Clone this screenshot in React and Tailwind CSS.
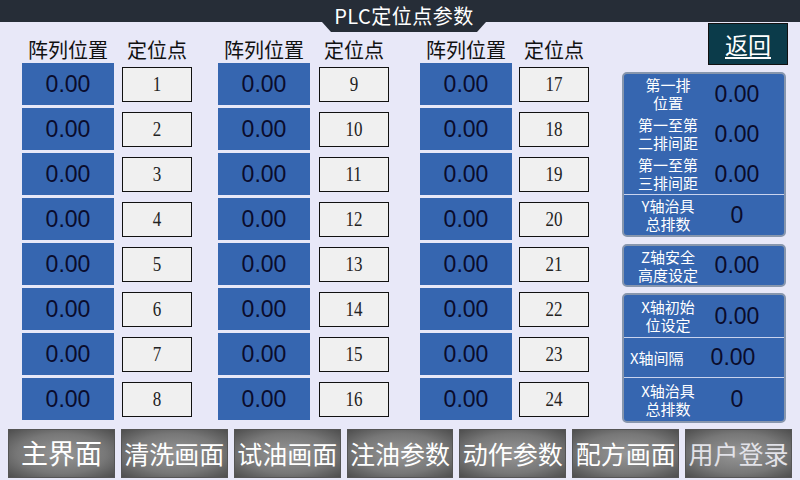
import React from "react";

const cjk = "font-['Noto_Sans_CJK_SC',sans-serif]";
const sans = "font-['Liberation_Sans',Arial,sans-serif]";

// positions 1..24 in three groups of eight
const groups = [
  { ml: "ml-[22px]", gap: "gap-[8px]", start: 1 },
  { ml: "ml-[26px]", gap: "gap-[9px]", start: 9 },
  { ml: "ml-[31px]", gap: "gap-[7px]", start: 17 },
];

const navItems = ["主界面", "清洗画面", "试油画面", "注油参数", "动作参数", "配方画面", "用户登录"];

const PointGroup = ({ ml, gap, start }) => (
  <div className={`${ml} flex flex-col`}>
    <div className={`flex ${gap} h-[27px] items-center text-[20px] text-[#111] ${cjk}`}>
      <div className="w-[92px] text-center whitespace-nowrap">阵列位置</div>
      <div className="w-[70px] text-center whitespace-nowrap">定位点</div>
    </div>
    <div className="flex flex-col gap-[3px]">
      {Array.from({ length: 8 }, (_, i) => (
        <div key={i} className={`flex ${gap} items-center`}>
          <div className={`w-[92px] h-[42px] bg-[#3666b0] flex items-center justify-center text-[23px] text-[#0a0c2c] ${sans}`}>
            0.00
          </div>
          <div className="w-[70px] h-[35px] bg-[#f0f0f0] border border-[#111] flex items-center justify-center">
            <span className="inline-block scale-x-85 text-[20px] text-[#222] font-['Liberation_Serif',serif]">
              {start + i}
            </span>
          </div>
        </div>
      ))}
    </div>
  </div>
);

const ParamRow = ({ label, value = "0.00", h, divider, left }) => (
  <div className={`flex items-center ${h} ${divider ? "border-t border-[#c9d3ee]" : ""}`}>
    {left ? (
      <div className={`pl-[6px] w-[84px] text-[15px] leading-[18px] text-white whitespace-nowrap ${cjk}`}>{label}</div>
    ) : (
      <div className={`w-[88px] flex flex-col items-center text-[15px] text-white ${cjk}`}>
        {label.map((l) => (
          <span key={l} className="block h-[18px] leading-[18px] whitespace-nowrap">{l}</span>
        ))}
      </div>
    )}
    <div className={`w-[50px] text-center text-[23px] text-[#0a0c2c] ${sans}`}>{value}</div>
  </div>
);

const Panel = ({ className, children }) => (
  <div className={`w-[164px] border-2 border-[#8796ad] rounded-[5px] bg-[#3666b0] overflow-hidden flex flex-col ${className}`}>
    {children}
  </div>
);

export default function App() {
  return (
    <div className="relative w-[800px] h-[480px] bg-[#e8e8f8] flex flex-col overflow-hidden">
      {/* top bar */}
      <div className="h-[22px] bg-[#262d37] shrink-0" />
      <div className="absolute left-[322px] top-0 w-[164px] h-[32px] bg-[#262d37] [clip-path:polygon(0_0,100%_0,100%_22px,calc(100%-9px)_100%,9px_100%,0_22px)] flex items-center justify-center">
        <span className={`text-[20px] text-white tracking-[0.5px] ${cjk}`}>PLC定位点参数</span>
      </div>

      {/* content */}
      <div className="flex h-[407px] shrink-0">
        <div className="flex pt-[14px]">
          {groups.map((g) => (
            <PointGroup key={g.start} {...g} />
          ))}
        </div>

        <div className="ml-[33px] w-[166px] flex flex-col">
          <div className="ml-auto mt-[1px] w-[80px] h-[42px] bg-[#0b3b4a] border border-[#111] flex items-center justify-center">
            <span className={`text-[23px] text-white underline underline-offset-[3px] ${cjk}`}>返回</span>
          </div>

          <Panel className="mt-[7px] h-[165px]">
            <ParamRow label={["第一排", "位置"]} h="h-[40px]" />
            <ParamRow label={["第一至第", "二排间距"]} h="h-[40px]" />
            <ParamRow label={["第一至第", "三排间距"]} h="h-[40px]" />
            <ParamRow label={["Y轴治具", "总排数"]} value="0" h="flex-1" divider />
          </Panel>

          <Panel className="mt-[7px] h-[43px]">
            <ParamRow label={["Z轴安全", "高度设定"]} h="flex-1" />
          </Panel>

          <Panel className="mt-[6px] h-[130px]">
            <ParamRow label={["X轴初始", "位设定"]} h="h-[42px]" />
            <ParamRow label="X轴间隔" left h="h-[40px]" divider />
            <ParamRow label={["X轴治具", "总排数"]} value="0" h="flex-1" divider />
          </Panel>
        </div>
      </div>

      {/* bottom navigation */}
      <div className="flex gap-[6px] px-[8px] h-[49px] shrink-0">
        {navItems.map((t, i) => (
          <div
            key={t}
            className={`w-[107px] h-[49px] border border-[#555] bg-[radial-gradient(ellipse_at_center,#969696_0%,#777_60%,#4e4e4e_100%)] flex items-center justify-center whitespace-nowrap ${cjk} ${
              i === 0 ? "text-[27px]" : "text-[25px]"
            } ${i === 6 ? "text-[#e2e2e8]" : "text-white"}`}
          >
            {t}
          </div>
        ))}
      </div>
    </div>
  );
}
